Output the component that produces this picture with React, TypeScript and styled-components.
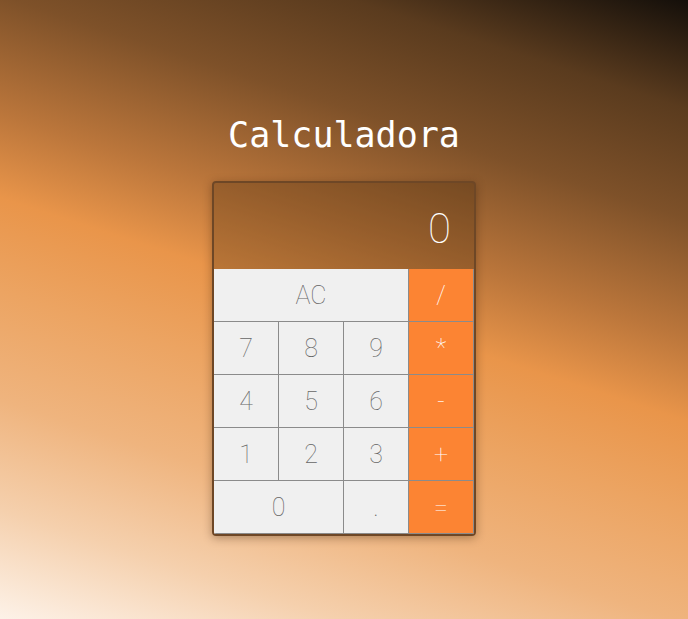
import React, { useState } from 'react'
import styled, { createGlobalStyle } from 'styled-components'

const GlobalStyle = createGlobalStyle`
  html, body {
    margin: 0;
    padding: 0;
    height: 100%;
  }
  body {
    font-family: Roboto, "Noto Sans", sans-serif;
  }
`

const Page = styled.main`
  min-height: 100vh;
  box-sizing: border-box;
  padding-top: 113px;
  display: flex;
  flex-direction: column;
  align-items: center;
  background: linear-gradient(
    198deg,
    #140f0a 0%,
    #5a3b1e 13%,
    #7e5129 26%,
    #bb763b 40%,
    #e9954a 50%,
    #eca462 61%,
    #efb47e 74%,
    #f5d0ad 87%,
    #fdf2e8 100%
  );
`

const Title = styled.h1`
  margin: 0 0 24px;
  font-family: "DejaVu Sans Mono", "Liberation Mono", monospace;
  font-weight: 400;
  font-size: 35px;
  line-height: 44px;
  color: #fff;
`

const Calculator = styled.div`
  width: 260px;
  border: 2px solid #6e4726;
  border-radius: 4px;
  overflow: hidden;
  box-shadow: 0 2px 10px rgba(40, 20, 0, 0.35);
`

const Display = styled.div`
  height: 86px;
  box-sizing: border-box;
  padding: 4px 23px 0;
  display: flex;
  align-items: center;
  justify-content: flex-end;
  background: rgba(45, 22, 0, 0.25);
  color: #fff;
  font-family: Roboto, sans-serif;
  font-weight: 100;
  font-size: 42px;
  font-variant-numeric: slashed-zero;
`

const Keys = styled.div`
  display: grid;
  grid-template-columns: repeat(4, 1fr);
  grid-auto-rows: 53px;
`

const Key = styled.button<{ $span?: number; $op?: boolean }>`
  grid-column: span ${p => p.$span ?? 1};
  margin: 0;
  padding: 0;
  border: none;
  border-right: 1px solid #8b8b8b;
  border-bottom: 1px solid #8b8b8b;
  border-radius: 0;
  background: ${p => (p.$op ? '#fc8433' : '#f0f0f0')};
  color: ${p => (p.$op ? '#fff' : '#666')};
  font-family: Roboto, sans-serif;
  font-weight: 100;
  font-size: 25px;
  font-variant-numeric: slashed-zero;
  cursor: pointer;
  outline: none;
`

const keys: { label: string; span?: number; op?: boolean }[] = [
  { label: 'AC', span: 3 },
  { label: '/', op: true },
  { label: '7' },
  { label: '8' },
  { label: '9' },
  { label: '*', op: true },
  { label: '4' },
  { label: '5' },
  { label: '6' },
  { label: '-', op: true },
  { label: '1' },
  { label: '2' },
  { label: '3' },
  { label: '+', op: true },
  { label: '0', span: 2 },
  { label: '.' },
  { label: '=', op: true },
]

export default function App() {
  const [value, setValue] = useState('0')

  const press = (label: string) => {
    if (label === 'AC') return setValue('0')
    if (label === '=') {
      try {
        // eslint-disable-next-line no-new-func
        setValue(String(Function(`return (${value})`)()))
      } catch {
        setValue('Error')
      }
      return
    }
    setValue(v => (v === '0' && label !== '.' ? label : v + label))
  }

  return (
    <>
      <GlobalStyle />
      <Page>
        <Title>Calculadora</Title>
        <Calculator>
          <Display>{value}</Display>
          <Keys>
            {keys.map(k => (
              <Key key={k.label} $span={k.span} $op={k.op} onClick={() => press(k.label)}>
                {k.label}
              </Key>
            ))}
          </Keys>
        </Calculator>
      </Page>
    </>
  )
}
